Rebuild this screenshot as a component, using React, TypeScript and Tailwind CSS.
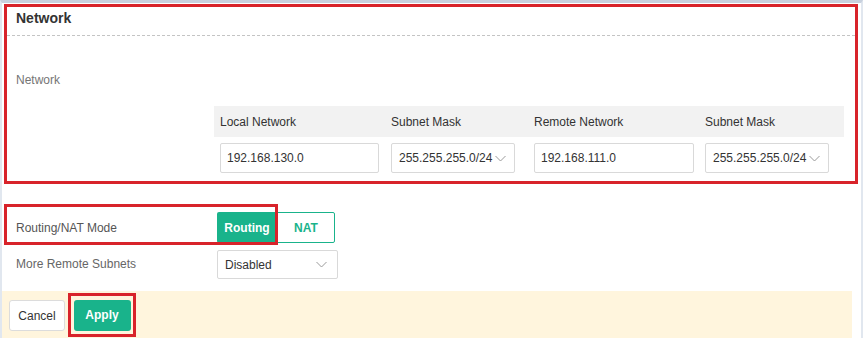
const FONT = "font-['Liberation_Sans',Arial,sans-serif]";

function Chevron() {
  return (
    <svg width="11" height="7" viewBox="0 0 11 7" fill="none" className="shrink-0">
      <path d="M0.5 1 L5.5 6 L10.5 1" stroke="#9a9a9a" strokeWidth="1" />
    </svg>
  );
}

function TextInput({ value, width }: { value: string; width: string }) {
  return (
    <div
      className={`${width} h-[30px] border border-[#d9d9d9] rounded-[2px] bg-white flex items-center pl-[6px] text-[12px] text-[#333]`}
    >
      {value}
    </div>
  );
}

function SelectBox({ value, width, padRight = "pr-[8px]" }: { value: string; width: string; padRight?: string }) {
  return (
    <div
      className={`${width} border border-[#d9d9d9] rounded-[2px] bg-white flex items-center justify-between pl-[7px] ${padRight} text-[12px] text-[#333]`}
    >
      <span>{value}</span>
      <Chevron />
    </div>
  );
}

export default function App() {
  return (
    <div className={`${FONT} w-[863px] h-[338px] overflow-hidden bg-white border-t-[3px] border-t-[#c8d1de] border-x-2 border-x-[#e1e7ef]`}>
      {/* network section (annotated) */}
      <div className="mt-[1px] ml-[2px] w-[854px] h-[180px] border-[3px] border-[#d8232a]">
        <div className="h-[29px] pt-[1px] pl-[9px] border-b border-dashed border-[#c4c4c4]">
          <h2 className="text-[14px] leading-[20px] font-bold text-[#333]">Network</h2>
        </div>
        <div className="mt-[34px] pl-[9px] text-[12px] leading-[20px] text-[#757575]">Network</div>
        <div className="mt-[16px] ml-[207px] w-[630px]">
          <div className="grid grid-cols-[171px_143px_171px_145px] h-[31px] bg-[#f2f2f2] items-center text-[12px] text-[#333]">
            <span className="pl-[6px]">Local Network</span>
            <span className="pl-[6px]">Subnet Mask</span>
            <span className="pl-[6px]">Remote Network</span>
            <span className="pl-[6px]">Subnet Mask</span>
          </div>
          <div className="grid grid-cols-[171px_143px_171px_145px] pt-[6px]">
            <div className="pl-[6px]">
              <TextInput value="192.168.130.0" width="w-[159px]" />
            </div>
            <div className="pl-[6px]">
              <SelectBox value="255.255.255.0/24" width="w-[124px] h-[30px]" padRight="pr-[8px]" />
            </div>
            <div className="pl-[6px]">
              <TextInput value="192.168.111.0" width="w-[160px]" />
            </div>
            <div className="pl-[6px]">
              <SelectBox value="255.255.255.0/24" width="w-[124px] h-[30px]" padRight="pr-[8px]" />
            </div>
          </div>
        </div>
      </div>

      {/* routing / nat */}
      <div className="relative mt-[28px] flex items-center h-[31px] pl-[14px]">
        <span className="w-[201px] text-[12px] text-[#555]">Routing/NAT Mode</span>
        <div className="flex h-[31px]">
          <button className="w-[60px] h-full bg-[#19b38b] text-white text-[12px] font-bold rounded-l-[2px]">Routing</button>
          <button className="w-[58px] h-full border border-[#19b38b] text-[#19b38b] text-[12px] font-bold rounded-r-[2px]">NAT</button>
        </div>
        <div className="absolute left-[2px] top-[-8px] w-[274px] h-[41px] border-[3px] border-[#d8232a]" />
      </div>

      <div className="mt-[7px] flex items-center h-[29px] pl-[14px]">
        <span className="w-[201px] text-[12px] text-[#666] -mt-[2px]">More Remote Subnets</span>
        <SelectBox value="Disabled" width="w-[121px] h-[29px]" padRight="pr-[10px]" />
      </div>

      {/* footer */}
      <div className="mt-[12px] w-[850px] h-[47px] bg-[#fff5dd] flex items-start pt-[2px] pl-[7px]">
        <button className="mt-[7px] w-[56px] h-[31px] bg-white border border-[#dcdcdc] rounded-[3px] text-[12px] text-[#333]">
          Cancel
        </button>
        <div className="ml-[3px] w-[68px] h-[44px] border-[3px] border-[#d8232a] flex items-center justify-center">
          <button className="w-[57px] h-[31px] bg-[#19b38b] rounded-[3px] text-white text-[12px] font-bold">Apply</button>
        </div>
      </div>
    </div>
  );
}
